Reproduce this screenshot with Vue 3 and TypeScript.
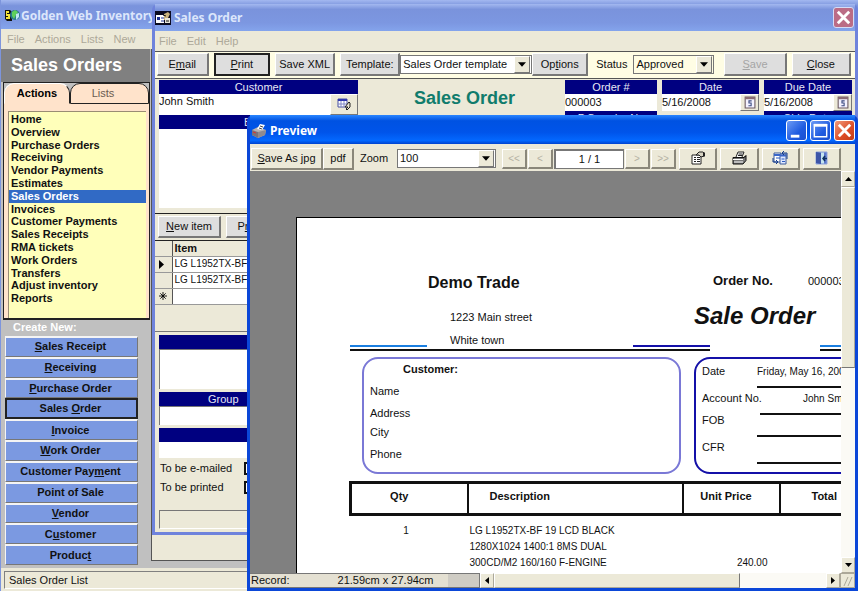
<script setup lang="ts">
import { ref } from 'vue'

type Mnemonic = [string, string, string]

const mainMenu: string[] = ['File', 'Actions', 'Lists', 'New']
const orderMenu: string[] = ['File', 'Edit', 'Help']

const sections: string[] = [
  'Home', 'Overview', 'Purchase Orders', 'Receiving', 'Vendor Payments', 'Estimates',
  'Sales Orders', 'Invoices', 'Customer Payments', 'Sales Receipts', 'RMA tickets',
  'Work Orders', 'Transfers', 'Adjust inventory', 'Reports',
]
const current = ref('Sales Orders')

const createButtons: Mnemonic[] = [
  ['', 'S', 'ales Receipt'],
  ['', 'R', 'eceiving'],
  ['', 'P', 'urchase Order'],
  ['Sales ', 'O', 'rder'],
  ['', 'I', 'nvoice'],
  ['', 'W', 'ork Order'],
  ['Customer Pay', 'm', 'ent'],
  ['Point of Sale', '', ''],
  ['', 'V', 'endor'],
  ['C', 'u', 'stomer'],
  ['Produc', 't', ''],
]
const focused = 3

const template = ref('Sales Order template')
const status = ref('Approved')
const zoom = ref('100')
const customer = ref('John Smith')
const orderNo = ref('000003')
const orderDate = ref('5/16/2008')
const dueDate = ref('5/16/2008')
const page = ref('1 / 1')
const items: string[] = ['LG L1952TX-BF 19', 'LG L1952TX-BF 19']
</script>

<template>
  <div class="desktop">
    <section class="main-window">
      <header class="title title-idle">
        <svg class="app-icon" viewBox="0 0 16 16" aria-hidden="true">
          <path d="M1 2h5l2 2v9H3L1 11z" fill="#111" />
          <path d="M2 3h3v2H3v1h3v5H2V9h2V8H2z" fill="#f4e33a" />
          <circle cx="11" cy="7" r="5" fill="#2a7a8c" />
          <path d="M8 4l3-2 3 2-2 3-2 4-2-3z" fill="#5fd05a" />
          <path d="M12 6l3-1v4l-3 3z" fill="#bfe6f4" />
        </svg>
        <h1>Golden Web Inventory</h1>
      </header>
      <nav class="menu">
        <button v-for="m in mainMenu" :key="m" type="button">{{ m }}</button>
      </nav>
      <div class="main-body">
        <aside class="sidebar">
          <h2>Sales Orders</h2>
          <div class="tab-panel">
            <div class="tabs">
              <button type="button" class="tab tab-on">Actions</button>
              <button type="button" class="tab">Lists</button>
            </div>
            <ul class="sections">
              <li v-for="s in sections" :key="s">
                <a href="#" :class="{ on: s === current }" @click.prevent="current = s">{{ s }}</a>
              </li>
            </ul>
          </div>
          <h3>Create New:</h3>
          <div class="create">
            <button v-for="(b, i) in createButtons" :key="i" type="button" :class="{ focus: i === focused }">{{ b[0] }}<u>{{ b[1] }}</u>{{ b[2] }}</button>
          </div>
        </aside>
        <div class="workspace"></div>
      </div>
      <footer class="main-status"><span>Sales Order List</span></footer>
    </section>

    <section class="order-window">
      <header class="title title-idle">
        <svg class="app-icon" viewBox="0 0 16 16" aria-hidden="true">
          <rect x="0" y="1" width="16" height="14" fill="#0a0a20" />
          <rect x="1" y="5" width="8" height="8" fill="#fff" />
          <rect x="2" y="7" width="3" height="3" fill="#1c2f90" />
          <path d="M6 8h3M6 11h3" stroke="#1c2f90" />
          <path d="M9 4l4-2 2 2-3 6H9z" fill="#c9b27c" />
          <path d="M10 8h5v5h-5z" fill="#e9e6da" />
          <path d="M8 5l3 1M11 11h3" stroke="#111" />
        </svg>
        <h1>Sales Order</h1>
        <button type="button" class="win-btn close-idle" aria-label="Close window">
          <svg viewBox="0 0 20 20"><path d="M4 4l12 12M16 4L4 16" stroke="#fff" stroke-width="3" /></svg>
        </button>
      </header>
      <nav class="menu">
        <button v-for="m in orderMenu" :key="m" type="button">{{ m }}</button>
      </nav>
      <div class="order-tools">
        <button type="button" class="grey w-email">E<u>m</u>ail</button>
        <button type="button" class="grey w-print focus"><u>P</u>rint</button>
        <button type="button" class="grey w-xml">Save XML</button>
        <div class="joined">
          <label class="grey tpl-label" for="tpl">Template:</label>
          <div class="combo w-tpl">
            <select id="tpl" v-model="template"><option>Sales Order template</option></select>
            <span class="arrow" aria-hidden="true"><svg viewBox="0 0 9 5"><path d="M0 0h9L4.500 5z" /></svg></span>
          </div>
          <button type="button" class="grey w-opt">Op<u>t</u>ions</button>
        </div>
        <div class="status-field">
          <label for="st">Status</label>
          <div class="combo w-st">
            <select id="st" v-model="status"><option>Approved</option></select>
            <span class="arrow" aria-hidden="true"><svg viewBox="0 0 9 5"><path d="M0 0h9L4.500 5z" /></svg></span>
          </div>
        </div>
        <span class="spring"></span>
        <button type="button" class="grey w-save" disabled><u>S</u>ave</button>
        <button type="button" class="grey w-close"><u>C</u>lose</button>
      </div>

      <div class="order-head">
        <div class="customer-col">
          <label class="bar" for="cust">Customer</label>
          <div class="field">
            <input id="cust" v-model="customer" type="text" />
            <button type="button" class="pick" aria-label="Pick customer">
              <svg viewBox="0 0 14 13"><path d="M1 1h9v8H1z" fill="#fff" stroke="#4850a0" /><path d="M1 2h9" stroke="#3038b0" stroke-width="2" /><path d="M1 6h9M4 3v6M7 3v6" stroke="#8088c8" /><path d="M8 9l4-5 1 1v4l-3 3-1-1 2-2z" fill="#e8e4d0" stroke="#222" /></svg>
            </button>
          </div>
          <label class="bar" for="bill">Bill To</label>
          <textarea id="bill" class="bill"></textarea>
        </div>
        <h2>Sales Order</h2>
        <div class="meta-col w-no">
          <label class="bar" for="ono">Order #</label>
          <div class="field"><input id="ono" v-model="orderNo" type="text" /></div>
          <label class="bar" for="po">P.O. order No</label>
          <div class="field"><input id="po" type="text" /></div>
        </div>
        <div class="meta-col w-date">
          <label class="bar" for="odate">Date</label>
          <div class="field">
            <input id="odate" v-model="orderDate" type="text" />
            <button type="button" class="cal" aria-label="Pick date"><svg viewBox="0 0 12 12"><path d="M2 1h9v10H2z" fill="#f4f2ff" stroke="#6a5a62" /><path d="M2 2h9" stroke="#8a6a72" stroke-width="2" /><path d="M8 4.500H5.500V6.500H7.500V9H5" fill="none" stroke="#3a4a80" /></svg></button>
          </div>
        </div>
        <div class="meta-col w-due">
          <label class="bar" for="ddate">Due Date</label>
          <div class="field">
            <input id="ddate" v-model="dueDate" type="text" />
            <button type="button" class="cal" aria-label="Pick due date"><svg viewBox="0 0 12 12"><path d="M2 1h9v10H2z" fill="#f4f2ff" stroke="#6a5a62" /><path d="M2 2h9" stroke="#8a6a72" stroke-width="2" /><path d="M8 4.500H5.500V6.500H7.500V9H5" fill="none" stroke="#3a4a80" /></svg></button>
          </div>
          <label class="bar" for="ship">Ship Date</label>
          <div class="field"><input id="ship" type="text" /></div>
        </div>
      </div>

      <div class="item-tools">
        <button type="button" class="grey w-new"><u>N</u>ew item</button>
        <button type="button" class="grey w-new">P<u>r</u>int list</button>
      </div>
      <table class="items">
        <thead><tr><th class="mark"></th><th>Item</th></tr></thead>
        <tbody>
          <tr v-for="(it, i) in items" :key="i">
            <td class="mark"><svg v-if="i === 0" viewBox="0 0 5 9" width="5" height="9"><path d="M0 0l5 4.500L0 9z" /></svg></td>
            <td>{{ it }}</td>
          </tr>
          <tr><td class="mark"><svg viewBox="0 0 9 9" width="8" height="8"><path d="M4.500 0v9M0 4.500h9M1.500 1.500l6 6M7.500 1.500l-6 6" stroke="#000" /></svg></td><td></td></tr>
        </tbody>
      </table>
      <div class="item-foot"></div>
      <div class="extras">
        <div class="bar"></div>
        <div class="box box-tall"></div>
        <div class="bar bar-group">Group</div>
        <div class="box"></div>
        <div class="bar"></div>
        <div class="box box-low"></div>
        <div class="check"><label for="mail">To be e-mailed</label><input id="mail" type="checkbox" /></div>
        <div class="check"><label for="prn">To be printed</label><input id="prn" type="checkbox" /></div>
        <div class="sunken"></div>
      </div>
    </section>

    <section class="preview">
      <header class="title title-live">
        <svg class="app-icon" viewBox="0 0 16 16" aria-hidden="true">
          <path d="M1 7l6-3 8 3-1 5-7 3-6-3z" fill="#b9b4b4" />
          <path d="M1 7l6 2v6l-6-3z" fill="#77727c" />
          <path d="M7 9l8-2-1 5-7 3z" fill="#8e8a90" />
          <path d="M6 6l3-5 5 1-3 5z" fill="#fff" />
          <path d="M9 3l3 1M8 5l3 1" stroke="#444" />
          <path d="M2 9l3 1" stroke="#d33" />
        </svg>
        <h1>Preview</h1>
        <button type="button" class="win-btn" aria-label="Minimize"><svg viewBox="0 0 20 20"><path d="M4 16h9" stroke="#fff" stroke-width="3" /></svg></button>
        <button type="button" class="win-btn" aria-label="Maximize"><svg viewBox="0 0 20 20"><path d="M3.500 4h13v12.500h-13z" fill="none" stroke="#fff" stroke-width="1.500" /><path d="M3 4.500h14" stroke="#fff" stroke-width="3" /></svg></button>
        <button type="button" class="win-btn close-live" aria-label="Close preview"><svg viewBox="0 0 20 20"><path d="M4 4l12 12M16 4L4 16" stroke="#fff" stroke-width="3" /></svg></button>
      </header>
      <div class="preview-tools">
        <button type="button" class="flat w-jpg"><u>S</u>ave As jpg</button>
        <button type="button" class="flat w-pdf">pdf</button>
        <label class="zoom-label" for="zm">Zoom</label>
        <div class="combo w-zoom">
          <select id="zm" v-model="zoom"><option>100</option></select>
          <span class="arrow" aria-hidden="true"><svg viewBox="0 0 9 5"><path d="M0 0h9L4.500 5z" /></svg></span>
        </div>
        <div class="pager">
          <button type="button" class="flat" disabled>&lt;&lt;</button>
          <button type="button" class="flat" disabled>&lt;</button>
          <input v-model="page" type="text" aria-label="Page" />
          <button type="button" class="flat" disabled>&gt;</button>
          <button type="button" class="flat" disabled>&gt;&gt;</button>
        </div>
        <div class="icons">
          <button type="button" class="flat" aria-label="Page setup">
            <svg viewBox="0 0 16 14"><path d="M2 4h9v9H2z" fill="#fff" stroke="#222" /><path d="M4 6.500h2M7 6.500h3M4 8.500h2M7 8.500h3M4 10.500h2M7 10.500h3" stroke="#222" /><path d="M6 4l3-3h4l1 1v3l-3 1-2-2z" fill="#d8d4c4" stroke="#222" /><path d="M13 1.500h2v4h-2z" fill="#222" /></svg>
          </button>
          <button type="button" class="flat" aria-label="Print">
            <svg viewBox="0 0 16 14"><path d="M5 6l2-5h6l-2 5" fill="#fff" stroke="#222" /><path d="M7.500 3h4M7 4.500h4" stroke="#222" /><path d="M2 6.500h11l2-2v5l-3 3.500H2z" fill="#777" stroke="#111" /><path d="M2 8.500h10M3 11h9" stroke="#fff" /><path d="M12 7l3-2" stroke="#111" /></svg>
          </button>
          <button type="button" class="flat" aria-label="Refresh">
            <svg viewBox="0 0 16 14"><path d="M2 2h7v9H2z" fill="#fff" stroke="#3a5a9a" /><path d="M8 3h6v10H8z" fill="#dfe8ff" stroke="#3a5a9a" /><path d="M2 4h6M8 4.500h6" stroke="#3a66c8" stroke-width="2" /><path d="M1 7v4h5M4 9l2 2-2 2M15 8V2h-4M12 0l-2 2 2 2" fill="none" stroke="#123a8c" /><path d="M4 7h4M9.500 8h3M10 10.500h3" stroke="#2a5ac0" /></svg>
          </button>
          <button type="button" class="flat" aria-label="Exit">
            <svg viewBox="0 0 16 14"><path d="M3 1h11v12H3z" fill="#5a76cc" stroke="#8fa4dc" /><path d="M3 1l5 1v11l-5-1z" fill="#3d55a8" /><path d="M8 1.500h3v11H8z" fill="#c4e4f0" /><path d="M14 7.500h-4M12 5l-2 2.500 2 2.500" fill="none" stroke="#0c2f60" stroke-width="1.500" /></svg>
          </button>
        </div>
      </div>

      <div class="viewer">
        <div class="canvas">
          <article class="sheet">
            <div class="letterhead">
              <div class="company">
                <h2>Demo Trade</h2>
                <p>1223 Main street</p>
                <p>White town</p>
              </div>
              <div class="doc-id">
                <p><b>Order No.</b><span>000003</span></p>
                <h2>Sale Order</h2>
              </div>
            </div>
            <div class="rules">
              <div class="rule-group"><i class="sky"></i><i class="ink"></i></div>
              <div class="rule-group"><i class="sky"></i></div>
            </div>
            <div class="parties">
              <div class="party">
                <h3>Customer:</h3>
                <p>Name</p>
                <p class="near">Address</p>
                <p>City</p>
                <p>Phone</p>
              </div>
              <dl class="facts">
                <div><dt>Date</dt><dd class="date">Friday, May 16, 2008</dd></div>
                <div><dt>Account No.</dt><dd class="acct">John Smith</dd></div>
                <div><dt>FOB</dt><dd></dd></div>
                <div><dt>CFR</dt><dd></dd></div>
              </dl>
            </div>
            <table class="lines">
              <colgroup><col class="c-qty" /><col class="c-desc" /><col class="c-price" /><col /></colgroup>
              <thead><tr><th>Qty</th><th class="desc">Description</th><th>Unit Price</th><th>Total</th></tr></thead>
              <tbody>
                <tr>
                  <td class="qty">1</td>
                  <td>LG L1952TX-BF 19 LCD BLACK<br />1280X1024 1400:1 8MS DUAL<br />300CD/M2 160/160 F-ENGINE</td>
                  <td class="num">240.00</td>
                  <td></td>
                </tr>
              </tbody>
            </table>
          </article>
        </div>
        <div class="vscroll" aria-hidden="true">
          <span class="sb"><svg viewBox="0 0 7 4" width="7" height="4"><path d="M3.500 0L7 4H0z" /></svg></span>
          <span class="vthumb"></span>
          <span class="spring"></span>
          <span class="sb"><svg viewBox="0 0 7 4" width="7" height="4"><path d="M0 0h7L3.500 4z" /></svg></span>
        </div>
      </div>
      <footer class="preview-foot">
        <div class="record"><span>Record:</span><span>21.59cm x 27.94cm</span><i></i></div>
        <span class="sb"><svg viewBox="0 0 4 7" width="4" height="7"><path d="M4 0v7L0 3.500z" /></svg></span>
        <span class="hthumb"></span>
        <span class="htrack"></span>
        <span class="sb"><svg viewBox="0 0 4 7" width="4" height="7"><path d="M0 0l4 3.500L0 7z" /></svg></span>
        <span class="grip"><svg viewBox="0 0 12 12" width="12" height="12"><path d="M2 11L6 2M6 11l4-9" stroke="#aca899" /></svg></span>
      </footer>
    </section>
  </div>
</template>

<style>
body {
  margin: 0;
  overflow: hidden;
}
</style>

<style scoped>
.desktop {
  position: relative;
  height: 100vh;
  overflow: hidden;
  font: 11px/13px "Liberation Sans", Arial, sans-serif;
  color: #111;
  background: #7d95dd;
}
.desktop *,
.desktop *::before {
  box-sizing: border-box;
}
h1, h2, h3, p, ul, dl, dd {
  margin: 0;
  padding: 0;
}
button, input, select, textarea {
  font: inherit;
  color: inherit;
  margin: 0;
  padding: 0;
  border-radius: 0;
}
button {
  white-space: nowrap;
}
svg {
  display: block;
}
.spring {
  flex: 1;
}

/* window chrome */
.title {
  display: flex;
  align-items: center;
  gap: 3px;
  flex: none;
}
.title h1 {
  flex: 1;
  min-width: 0;
  overflow: hidden;
  white-space: nowrap;
  font: bold 12px/18px "Noto Sans", "Open Sans", sans-serif;
}
.title-idle {
  background: linear-gradient(#a3b8f0, #7a93dc 20%, #7c97e1 70%, #84a4ec);
  color: #dce6fb;
}
.title-live {
  background: linear-gradient(#2a86ff, #0052e2 20%, #0054ea 60%, #0368ff 88%, #0043cf);
  color: #fff;
}
.app-icon {
  width: 16px;
  height: 16px;
  flex: none;
}
.win-btn {
  width: 21px;
  height: 21px;
  border: 1px solid #fff;
  border-radius: 3px;
  background: linear-gradient(135deg, #6d9bf5, #1f5be0 60%, #1b50cf);
}
.win-btn svg {
  width: 19px;
  height: 19px;
}
.close-idle {
  background: #bb6c86;
  border-color: #d5dcf6;
}
.close-live {
  background: linear-gradient(135deg, #f09a7c, #dc4c26 60%, #c33c18);
}
.menu {
  display: flex;
  gap: 10px;
  align-items: center;
  flex: none;
  background: #ece9d8;
}
.menu button {
  border: 0;
  background: none;
  color: #aca899;
}

/* main window */
.main-window {
  display: flex;
  flex-direction: column;
  height: 100%;
  border-left: 1px solid #7d95dd;
  background: #c0c0c0;
}
.main-window > .title {
  height: 29px;
  padding: 3px 4px 0 3px;
  gap: 1px;
}
.main-window > .menu {
  height: 20px;
  padding-left: 6px;
}
.main-body {
  flex: 1;
  display: flex;
  gap: 1px;
  min-height: 0;
}
.sidebar {
  width: 149px;
  flex: none;
}
.sidebar h2 {
  height: 33px;
  padding-left: 10px;
  font-size: 18px;
  line-height: 32px;
  color: #fff;
  background: #808080;
}
.tab-panel {
  margin-left: 2px;
  height: 238px;
  border: 1px solid #222;
  border-width: 1px 1px 2px;
  background: #ffe3cb;
}
.tabs {
  display: flex;
  height: 21px;
  background: linear-gradient(#c0c0c0, #c0c0c0 50%, #ffe3cb 50%);
}
.tab {
  flex: 1;
  border: 1px solid #222;
  border-radius: 10px 10px 0 0;
  background: #ffe3cb;
  color: #6a5c50;
  padding-right: 13px;
}
.tab-on {
  border-color: #fff #222 #ffe3cb #fff;
  font-weight: bold;
  color: #000;
  padding-right: 0;
}
.sections {
  height: 207px;
  margin: 7px 3px 0 4px;
  padding: 1px 0 13px;
  display: grid;
  grid-auto-rows: 1fr;
  list-style: none;
  background: #ffffba;
  border: 1px solid #9a8c74;
  border-width: 1px 0 0 1px;
}
.sections a {
  display: block;
  height: 100%;
  padding-left: 2px;
  line-height: 12px;
  font-weight: bold;
  color: #111;
  text-decoration: none;
}
.sections a.on {
  background: #316ac5;
  color: #fff;
}
.sidebar h3 {
  padding: 0 0 0 12px;
  height: 16px;
  font-size: 11px;
  line-height: 14px;
  color: #fff;
}
.create {
  display: grid;
  grid-auto-rows: 1fr;
  height: 229px;
  margin: 0 12px 0 4px;
}
.create button {
  padding-right: 2px;
  border: 1px solid;
  border-color: #f4f4f4 #777 #777 #f4f4f4;
  border-width: 2px 1px 1px;
  background: #7b99e1;
  font-weight: bold;
}
.create .focus {
  border: 2px solid #222;
}
.workspace {
  flex: 1;
  margin-bottom: 7px;
  border: 1px solid #555;
  background: #ece9d8;
}
.main-status {
  flex: none;
  height: 23px;
  padding: 3px 0 2px 3px;
  background: #ece9d8;
}
.main-status span {
  display: block;
  height: 18px;
  padding-left: 4px;
  line-height: 17px;
  border: 1px solid;
  border-color: #808080 #fff #fff #808080;
}

/* sales order window */
.order-window {
  position: absolute;
  left: 152px;
  right: 0;
  top: 4px;
  border: 3px solid #6f83dc;
  border-top: 0;
  border-radius: 6px 6px 0 0;
  background: #ece9d8;
}
.order-window > .title {
  height: 27px;
  padding-right: 1px;
}
.order-window > .menu {
  height: 20px;
  padding-left: 4px;
}
.order-tools {
  display: flex;
  height: 28px;
  padding: 1px 4px 2px 2px;
  gap: 5px;
  background: #fffde4;
  border: 1px solid #555;
  border-width: 1px 0;
}
.grey {
  border: 1px solid;
  border-color: #fff #777 #777 #fff;
  border-width: 1px 2px 2px 1px;
  background: #dedede;
  text-align: center;
}
.grey:disabled {
  color: #a5a5a5;
}
.grey.focus {
  border: 2px solid #222;
}
.w-email { width: 53px; }
.w-print { width: 58px; }
.w-xml { width: 62px; }
.w-opt { width: 56px; }
.w-save { width: 64px; }
.w-close { width: 61px; }
.w-new { width: 63px; }
.joined {
  display: flex;
}
.tpl-label {
  width: 60px;
  line-height: 21px;
}
.combo {
  display: flex;
  align-self: center;
  height: 19px;
  padding-right: 1px;
  background: #fff;
  border: 1px solid #777;
}
.combo select {
  flex: 1;
  min-width: 0;
  padding-left: 2px;
  border: 0;
  background: none;
  appearance: none;
}
.w-tpl { width: 132px; }
.w-st { width: 81px; background: #fffde4; }
.w-zoom { width: 99px; }
.arrow {
  display: grid;
  place-items: center;
  flex: none;
  width: 16px;
  background: #ece9d8;
  border: 1px solid;
  border-color: #fff #777 #777 #fff;
}
.arrow svg {
  width: 8px;
  height: 5px;
}
.status-field {
  display: flex;
  align-items: center;
  gap: 6px;
  padding-left: 3px;
}

.bar {
  display: block;
  height: 14px;
  line-height: 14px;
  text-align: center;
  color: #e8e8f4;
  background: #000080;
}
.order-head {
  display: flex;
  gap: 5px;
  height: 134px;
  padding: 1px 3px 5px 4px;
  overflow: hidden;
}
.order-head h2 {
  flex: 1;
  padding: 8px 0 0 6px;
  font-size: 18px;
  line-height: 20px;
  text-align: center;
  color: #107c6c;
}
.customer-col {
  display: flex;
  flex-direction: column;
  width: 199px;
}
.customer-col .field {
  height: 21px;
}
.customer-col .field input {
  padding-bottom: 6px;
}
.field {
  display: flex;
  height: 17px;
  background: #fff;
}
.field input {
  flex: 1;
  min-width: 0;
  width: 100%;
  border: 0;
  background: none;
}
.pick, .cal {
  display: grid;
  place-items: center;
  background: #ece9d8;
  border: 1px solid;
  border-color: #fff #777 #777 #fff;
}
.pick {
  width: 28px;
}
.pick svg {
  width: 14px;
  height: 13px;
}
.cal {
  width: 19px;
}
.cal svg {
  width: 13px;
  height: 13px;
}
.bill {
  flex: 1;
  border: 0;
  background: #fff;
  resize: none;
}
.w-no { width: 92px; }
.w-date { width: 97px; }
.w-due { width: 88px; }

.item-tools {
  display: flex;
  gap: 5px;
  height: 28px;
  padding: 2px 3px;
  border: 1px solid #222;
  border-width: 1px 0;
}
.items {
  width: 100%;
  border-collapse: collapse;
  table-layout: fixed;
  background: #fff;
  font-size: 10px;
}
.items th, .items td {
  height: 16px;
  padding: 0 0 0 2px;
  border: 1px solid #999;
  border-width: 0 0 1px;
  text-align: left;
  line-height: 12px;
}
.items th {
  height: 15px;
  background: #ece9d8;
  font-size: 11px;
}
.items .mark {
  width: 17px;
  padding: 0 0 0 4px;
  background: #ece9d8;
  border-right: 1px solid #555;
}
.item-foot {
  height: 27px;
  border-bottom: 1px solid #777;
}
.extras {
  padding: 3px 2px 3px 4px;
}
.box {
  height: 19px;
  margin-bottom: 3px;
  background: #fff;
  border: 1px solid #777;
  border-width: 1px 0 0 1px;
}
.box-tall {
  height: 40px;
}
.box-low {
  height: 16px;
  margin-bottom: 1px;
  border: 0;
}
.bar-group {
  padding-left: 49px;
  text-align: left;
}
.check {
  display: flex;
  align-items: center;
  height: 19px;
  padding-left: 1px;
}
.check label {
  width: 84px;
}
.check input {
  appearance: none;
  width: 13px;
  height: 13px;
  border: 2px solid #111;
  background: #fff;
}
.sunken {
  height: 19px;
  margin-top: 13px;
  border: 1px solid;
  border-color: #777 #fff #fff #777;
}

/* preview window */
.preview {
  position: absolute;
  left: 247px;
  right: 0;
  top: 115px;
  bottom: 0;
  display: flex;
  flex-direction: column;
  border: 3px solid #0b47d8;
  border-top: 0;
  border-radius: 6px 6px 0 0;
  background: #ece9d8;
}
.preview > .title {
  height: 29px;
  padding: 2px 0 0 1px;
}
.preview-tools {
  display: flex;
  align-items: center;
  flex: none;
  height: 27px;
  padding: 2px 14px 0 1px;
}
.flat {
  border: 1px solid;
  border-color: #fff #8a877a #8a877a #fff;
  border-width: 1px 2px 2px 1px;
  background: #ece9d8;
}
.flat:disabled {
  font-size: 10px;
  color: #b5b2a4;
}
.w-jpg {
  width: 72px;
  height: 22px;
}
.w-pdf {
  width: 31px;
  height: 22px;
}
.zoom-label {
  width: 43px;
  padding-left: 6px;
}
.pager {
  display: flex;
  gap: 1px;
  margin-left: 6px;
}
.pager button {
  width: 25px;
  height: 20px;
}
.pager input {
  width: 70px;
  height: 20px;
  border: 1px solid #777;
  border-width: 2px 1px 1px 2px;
  text-align: center;
  background: #fff;
}
.icons {
  flex: 1;
  display: grid;
  grid-template-columns: repeat(4, 1fr);
  gap: 3px;
  margin-left: 3px;
}
.icons button {
  display: grid;
  place-items: center;
  height: 22px;
}
.icons svg {
  width: 16px;
  height: 14px;
}
.viewer {
  flex: 1;
  display: flex;
  min-height: 0;
}
.canvas {
  flex: 1;
  min-width: 0;
  overflow: hidden;
  padding: 46px 0 0 46px;
  background: #808080;
}
.sheet {
  width: 816px;
  height: 1056px;
  padding: 54px 100px 0 52px;
  border: 1px solid #000;
  background: #fff;
}
.letterhead {
  display: flex;
  height: 73px;
}
.company {
  width: 345px;
  padding-left: 79px;
}
.company h2 {
  font-size: 16px;
  line-height: 22px;
}
.company p {
  padding: 17px 0 0 22px;
}
.company p + p {
  padding-top: 10px;
}
.doc-id p {
  display: flex;
  gap: 35px;
  padding-left: 19px;
  line-height: 18px;
}
.doc-id b {
  font-size: 13px;
}
.doc-id h2 {
  padding-top: 12px;
  font-size: 24px;
  line-height: 28px;
  font-style: italic;
}
.rules {
  display: flex;
  gap: 110px;
  margin-left: 1px;
}
.rule-group {
  display: flex;
  justify-content: space-between;
  width: 360px;
  height: 6px;
  border-bottom: 2px solid #111;
}
.rule-group + .rule-group {
  width: 80px;
}
.rule-group i {
  width: 77px;
  height: 2px;
}
.sky {
  background: #1b7fe0;
}
.ink {
  background: #1410a8;
}
.parties {
  display: flex;
  gap: 13px;
  margin: 6px 0 7px 13px;
}
.party {
  width: 319px;
  height: 117px;
  flex: none;
  padding: 3px 6px;
  border: 2px solid #7a78d6;
  border-radius: 16px;
}
.party h3 {
  padding-left: 33px;
  font-size: 11px;
  line-height: 14px;
}
.party p {
  padding-top: 9px;
}
.party p.near {
  margin-bottom: -3px;
}
.facts {
  width: 240px;
  flex: none;
  height: 117px;
  padding: 6px 0 0 6px;
  border: 2px solid #1410a8;
  border-radius: 16px;
}
.facts div {
  display: flex;
  align-items: flex-start;
  height: 27px;
}
.facts div:nth-child(even) {
  height: 22px;
}
.facts dt {
  width: 53px;
  white-space: nowrap;
}
.facts dd {
  flex: 1;
  height: 23px;
  margin-left: 2px;
  border-bottom: 2px solid #111;
  white-space: nowrap;
}
.facts .date {
  font-size: 10px;
}
.facts .acct {
  margin-left: 5px;
  padding-left: 43px;
  font-size: 10px;
}
.lines {
  width: 610px;
  border-collapse: collapse;
  table-layout: fixed;
}
.c-qty { width: 117px; }
.c-desc { width: 215px; }
.c-price { width: 97px; }
.lines thead {
  border: 3px solid #111;
}
.lines th {
  height: 32px;
  padding: 0 10px 5px 0;
  border-right: 2px solid #111;
  font-size: 11px;
}
.lines th:first-child {
  padding-right: 20px;
}
.lines th:last-child {
  padding-left: 31px;
  text-align: left;
}
.lines th.desc {
  padding-left: 21px;
  text-align: left;
}
.lines td {
  padding: 7px 12px 0 2px;
  font-size: 10px;
  line-height: 16px;
  vertical-align: top;
  white-space: nowrap;
}
.lines td.qty {
  text-align: center;
  padding-right: 8px;
}
.lines td.num {
  text-align: right;
  vertical-align: bottom;
}
.sb {
  display: grid;
  place-items: center;
  flex: none;
  width: 14px;
  height: 16px;
  background: #ece9d8;
  border: 1px solid;
  border-color: #fff #aca899 #aca899 #fff;
}
.vscroll {
  display: flex;
  flex-direction: column;
  width: 14px;
  background: #fbfaf5;
}
.vthumb {
  flex: 0 0 45%;
  background: #ece9d8;
  border: 1px solid;
  border-color: #fff #aca899 #777 #fff;
}
.preview-foot {
  display: flex;
  flex: none;
  height: 15px;
  background: #fbfaf5;
}
.preview-foot .sb {
  height: 15px;
}
.record {
  display: flex;
  gap: 48px;
  flex: 0 0 38%;
  line-height: 13px;
  padding-left: 1px;
  background: #e4e0d2;
  border: 1px solid #777;
  border-width: 1px 1px 1px 0;
  white-space: nowrap;
  overflow: hidden;
}
.record i {
  flex: 1;
  margin-left: -34px;
  background: #cfccc4;
}
.hthumb {
  flex: 246;
  background: #ece9d8;
  border: 1px solid;
  border-color: #fff #777 #aca899 #fff;
}
.htrack {
  flex: 86;
}
.grip {
  display: grid;
  place-items: center;
  width: 15px;
  background: #ece9d8;
  border: 1px solid #aca899;
}
</style>
